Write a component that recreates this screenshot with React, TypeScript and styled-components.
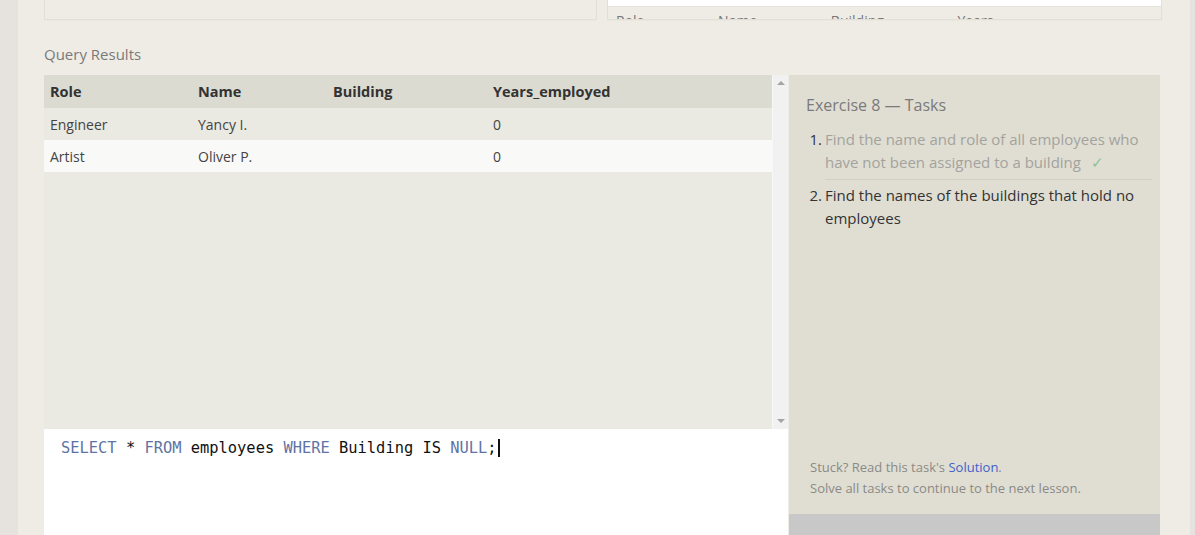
import React from "react";
import styled, { createGlobalStyle } from "styled-components";

const Global = createGlobalStyle`
  html, body { margin: 0; padding: 0; background: #e6e3df; }
  body { font-family: "Open Sans", "Noto Sans", sans-serif; overflow: hidden; }
`;

const Page = styled.div`
  display: flex;
  width: 1195px;
  height: 535px;
  overflow: hidden;
`;

const Gutter = styled.div<{ $w: number }>`
  width: ${(p) => p.$w}px;
  flex: none;
  background: #e6e3df;
`;

const Main = styled.div`
  flex: 1;
  background: #efece5;
  padding: 0 28px 0 26px;
  display: flex;
  flex-direction: column;
  & > * { flex: none; }
`;

const TopRow = styled.div`
  display: flex;
  gap: 10px;
  height: 20px;
  align-items: flex-end;
`;

const TopPanel = styled.div<{ $w: number }>`
  width: ${(p) => p.$w}px;
  height: 20px;
  box-sizing: border-box;
  border: 1px solid #e2dfd7;
  border-top: none;
  box-shadow: 0 2px 0 -1px #ebe8e1;
  overflow: hidden;
  display: flex;
  flex-direction: column;
  & > * { flex: none; }
`;

const WhiteStrip = styled.div`
  height: 6px;
  background: #ffffff;
  border-bottom: 1px solid #e4e2dc;
`;

const ClippedText = styled.div`
  font-size: 14px;
  line-height: 14px;
  color: #777;
  padding-left: 8px;
  margin-top: 7px;
  white-space: nowrap;
  word-spacing: 70px;
`;

const SectionLabel = styled.div`
  font-size: 15px;
  color: #7a7a7a;
  margin-top: 24px;
  height: 31px;
  line-height: 20px;
`;

const Workspace = styled.div`
  display: flex;
  align-items: flex-start;
`;

const LeftCol = styled.div`
  width: 744px;
  display: flex;
  flex-direction: column;
  & > * { flex: none; }
`;

const ResultsArea = styled.div`
  display: flex;
  height: 354px;
  background: #eae9e2;
`;

const TableWrap = styled.div`
  flex: 1;
`;

const Table = styled.table`
  width: 100%;
  border-collapse: collapse;
  table-layout: fixed;
  font-size: 14px;
  color: #333;
`;

const HeadCell = styled.th<{ $w?: number }>`
  text-align: left;
  font-weight: 700;
  font-size: 14.5px;
  background: #dcdbd1;
  height: 33px;
  padding: 0 0 0 6px;
  width: ${(p) => (p.$w ? p.$w + "px" : "auto")};
`;

const Row = styled.tr<{ $alt?: boolean }>`
  background: ${(p) => (p.$alt ? "#f9f9f8" : "#eae9e2")};
`;

const Cell = styled.td`
  height: 32px;
  padding: 0 0 0 6px;
  color: #444;
`;

const Scrollbar = styled.div`
  width: 16px;
  background: #f1f1f1;
  display: flex;
  flex-direction: column;
  justify-content: space-between;
  align-items: center;
  padding: 6px 0 6px;
  box-sizing: border-box;
  border-left: 1px solid #f7f7f7;
`;

const Arrow = styled.div<{ $down?: boolean }>`
  width: 0;
  height: 0;
  border-left: 4px solid transparent;
  border-right: 4px solid transparent;
  ${(p) =>
    p.$down
      ? "border-top: 4px solid #a3a3a3;"
      : "border-bottom: 4px solid #a3a3a3;"}
`;

const Editor = styled.div`
  height: 110px;
  background: #ffffff;
  padding: 9px 0 0 17px;
  box-sizing: border-box;
  font-family: "DejaVu Sans Mono", monospace;
  font-size: 15.4px;
  line-height: 20px;
  color: #111;
  white-space: pre;
`;

const Kw = styled.span`
  color: #6173a3;
`;

const Caret = styled.span`
  display: inline-block;
  width: 2px;
  height: 18px;
  background: #111;
  vertical-align: -4px;
  margin-left: 1px;
`;

const RightCol = styled.div`
  width: 371px;
  margin-left: 1px;
  display: flex;
  flex-direction: column;
  & > * { flex: none; }
`;

const TaskPanel = styled.div`
  height: 439px;
  background: #e0ded3;
  padding: 19px 8px 0 17px;
  box-sizing: border-box;
  display: flex;
  flex-direction: column;
`;

const TaskTitle = styled.div`
  font-size: 16px;
  color: #7a7a7a;
  line-height: 22px;
  margin-bottom: 12px;
`;

const TaskList = styled.ol`
  margin: 0;
  padding: 0;
  list-style: none;
  flex: 1;
`;

const TaskItem = styled.li<{ $done?: boolean }>`
  display: flex;
  font-size: 15px;
  line-height: 23px;
  color: ${(p) => (p.$done ? "#a3a39e" : "#333")};
  margin-bottom: ${(p) => (p.$done ? "4px" : "0")};
`;

const Num = styled.span`
  width: 16px;
  flex: none;
  text-align: right;
  color: #333;
`;

const TaskText = styled.span<{ $done?: boolean }>`
  margin-left: 3px;
  flex: 1;
  border-bottom: ${(p) => (p.$done ? "1px solid #d2d0c5" : "none")};
  padding-bottom: ${(p) => (p.$done ? "5px" : "0")};
`;

const Check = styled.span`
  color: #8fc28f;
  margin-left: 10px;
`;

const Footer = styled.div`
  font-size: 13px;
  line-height: 21px;
  color: #8a8a86;
  padding: 0 0 15px 4px;
`;

const Link = styled.a`
  color: #3d62c9;
  text-decoration: none;
`;

const GrayBar = styled.div`
  height: 30px;
  background: #c8c8c8;
`;

export default function App() {
  return (
    <>
      <Global />
      <Page>
        <Gutter $w={18} />
        <Main>
          <TopRow>
            <TopPanel $w={553} />
            <TopPanel $w={555}>
              <WhiteStrip />
              <ClippedText>Role Name Building Years</ClippedText>
            </TopPanel>
          </TopRow>
          <SectionLabel>Query Results</SectionLabel>
          <Workspace>
            <LeftCol>
              <ResultsArea>
                <TableWrap>
                  <Table>
                    <thead>
                      <tr>
                        <HeadCell $w={142}>Role</HeadCell>
                        <HeadCell $w={129}>Name</HeadCell>
                        <HeadCell $w={154}>Building</HeadCell>
                        <HeadCell>Years_employed</HeadCell>
                      </tr>
                    </thead>
                    <tbody>
                      <Row>
                        <Cell>Engineer</Cell>
                        <Cell>Yancy I.</Cell>
                        <Cell></Cell>
                        <Cell>0</Cell>
                      </Row>
                      <Row $alt>
                        <Cell>Artist</Cell>
                        <Cell>Oliver P.</Cell>
                        <Cell></Cell>
                        <Cell>0</Cell>
                      </Row>
                    </tbody>
                  </Table>
                </TableWrap>
                <Scrollbar>
                  <Arrow />
                  <Arrow $down />
                </Scrollbar>
              </ResultsArea>
              <Editor>
                <Kw>SELECT</Kw> * <Kw>FROM</Kw> employees <Kw>WHERE</Kw> Building IS <Kw>NULL</Kw>;<Caret />
              </Editor>
            </LeftCol>
            <RightCol>
              <TaskPanel>
                <TaskTitle>Exercise 8 — Tasks</TaskTitle>
                <TaskList>
                  <TaskItem $done>
                    <Num>1.</Num>
                    <TaskText $done>
                      Find the name and role of all employees who have not been assigned to a building
                      <Check>✓</Check>
                    </TaskText>
                  </TaskItem>
                  <TaskItem>
                    <Num>2.</Num>
                    <TaskText>Find the names of the buildings that hold no employees</TaskText>
                  </TaskItem>
                </TaskList>
                <Footer>
                  Stuck? Read this task's <Link href="#">Solution</Link>.
                  <br />
                  Solve all tasks to continue to the next lesson.
                </Footer>
              </TaskPanel>
              <GrayBar />
            </RightCol>
          </Workspace>
        </Main>
        <Gutter $w={5} />
      </Page>
    </>
  );
}
